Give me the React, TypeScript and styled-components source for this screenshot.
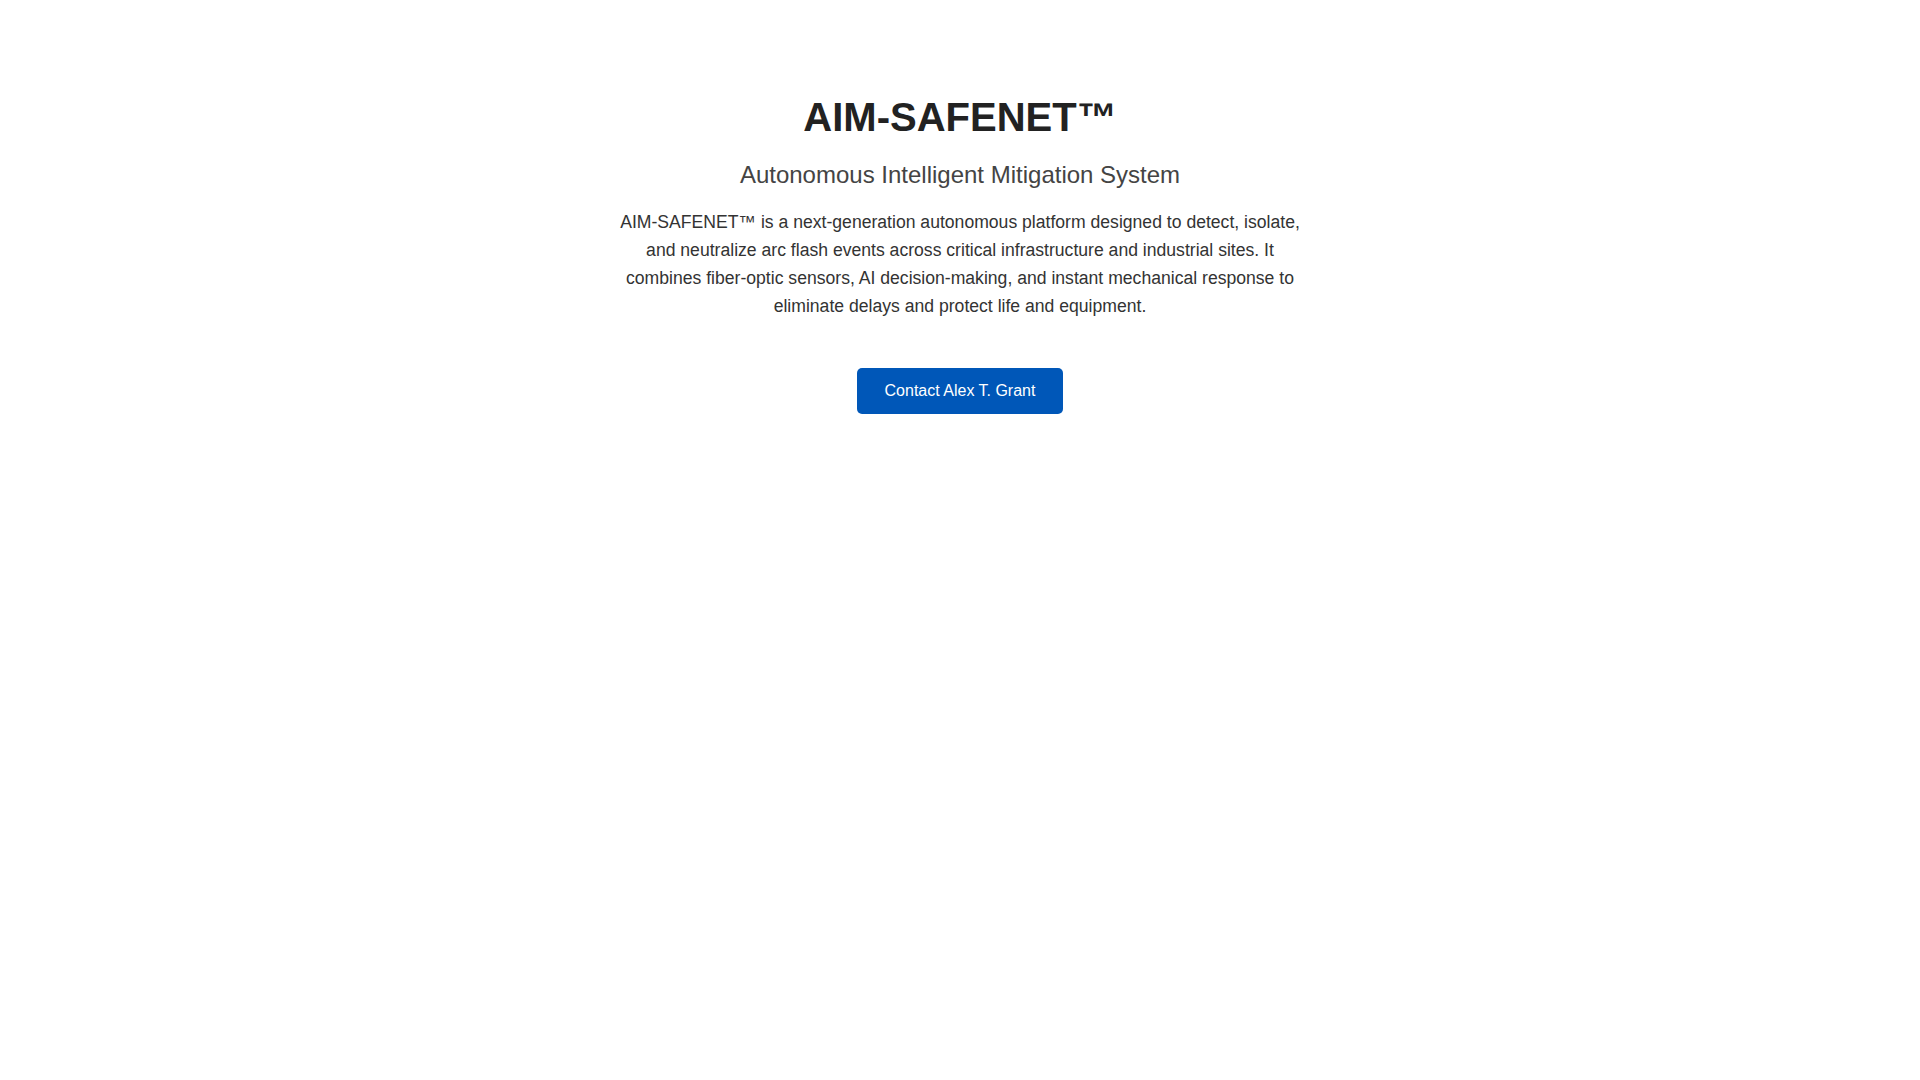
import React from "react";
import styled, { createGlobalStyle } from "styled-components";

const GlobalStyle = createGlobalStyle`
  body {
    margin: 0;
    background: #fff;
    font-family: "Liberation Sans", Arial, sans-serif;
  }
`;

const Hero = styled.section`
  padding: 95px 20px 0;
  text-align: center;
`;

const Title = styled.h1`
  margin: 0 0 21px;
  font-size: 40px;
  font-weight: 700;
  color: #222;
`;

const Subtitle = styled.h2`
  margin: 0 0 19px;
  font-size: 24px;
  font-weight: 400;
  color: #444;
`;

const Blurb = styled.p`
  max-width: 700px;
  margin: 0 auto 47px;
  font-size: 17.6px;
  line-height: 1.6;
  color: #333;
`;

const ContactButton = styled.a`
  display: inline-block;
  padding: 14px 28px;
  background: #0057b8;
  color: #fff;
  font-size: 16px;
  text-decoration: none;
  border-radius: 5px;
`;

export default function App() {
  return (
    <>
      <GlobalStyle />
      <Hero>
        <Title>AIM-SAFENET™</Title>
        <Subtitle>Autonomous Intelligent Mitigation System</Subtitle>
        <Blurb>
          AIM-SAFENET™ is a next-generation autonomous platform designed to
          detect, isolate, and neutralize arc flash events across critical
          infrastructure and industrial sites. It combines fiber-optic
          sensors, AI decision-making, and instant mechanical response to
          eliminate delays and protect life and equipment.
        </Blurb>
        <ContactButton href="#">Contact Alex T. Grant</ContactButton>
      </Hero>
    </>
  );
}
